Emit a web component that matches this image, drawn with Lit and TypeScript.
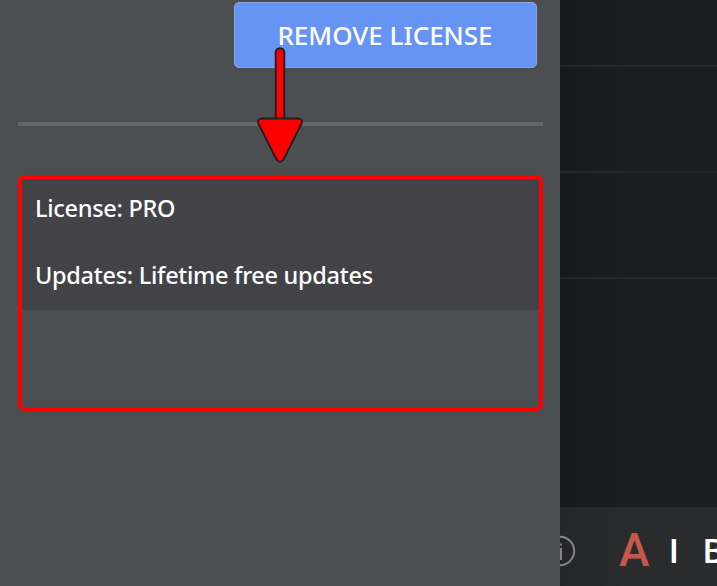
import { LitElement, html, css } from "lit";
import { customElement } from "lit/decorators.js";

@customElement("license-panel")
class LicensePanel extends LitElement {
  static styles = css`
    :host {
      display: flex;
      flex-direction: column;
      position: relative;
      box-sizing: border-box;
      width: 560px;
      height: 586px;
      padding: 2px 17.500px 0 17.500px;
      background: #4b4f51;
      color: #fff;
    }
    .remove {
      align-self: flex-end;
      box-sizing: border-box;
      width: 303px;
      height: 66px;
      margin: 0 6px 0 0;
      padding: 0;
      border: 1px solid #8ba5dc;
      border-radius: 5px;
      background: #6694f5;
      color: #fff;
      font: 500 26px/64px "Noto Sans", sans-serif;
      text-align: center;
    }
    .rule {
      height: 4px;
      margin-top: 54px;
      background: #656569;
    }
    .details {
      box-sizing: border-box;
      height: 236px;
      margin-top: 49px;
      border: 4px solid #f00;
      border-radius: 7px;
    }
    .row {
      height: 67px;
      padding-left: 13.500px;
      background: #434347;
      font: 500 23.500px/58px "Noto Sans", sans-serif;
      letter-spacing: -0.290px;
      white-space: nowrap;
    }
    .row:last-child {
      height: 63.500px;
    }
    .arrow {
      position: absolute;
      left: 254px;
      top: 44px;
    }
  `;
  render() {
    return html`
      <button class="remove">REMOVE LICENSE</button>
      <div class="rule"></div>
      <div class="details">
        <div class="row">License: PRO</div>
        <div class="row">Updates: Lifetime free updates</div>
      </div>
      <svg class="arrow" width="52" height="122" viewBox="0 0 52 122">
        <path
          d="M21.700 74.500V8.500a4.300 4.300 0 0 1 8.600 0V74.500H44.200Q49.600 75.300 47.300 80.100L29.600 115.200Q26 120.400 22.400 115.200L4.700 80.100Q2.400 75.300 7.800 74.500Z"
          fill="#f00" stroke="#211d20" stroke-width="1.900" stroke-linejoin="round"
        />
        <path d="M21.700 74.500h8.600" stroke="#211d20" stroke-width="1.900" />
      </svg>
    `;
  }
}

@customElement("page-strip")
class PageStrip extends LitElement {
  static styles = css`
    :host {
      display: flex;
      flex-direction: column;
      width: 157px;
      height: 586px;
      overflow: hidden;
      background: linear-gradient(90deg, #17181b, #1c1d20 65px);
    }
    .item {
      box-sizing: border-box;
      flex: none;
      height: 106px;
      border-bottom: 2px solid #27282b;
    }
    .item:first-child {
      height: 67px;
    }
    .bar {
      display: flex;
      align-items: flex-start;
      height: 79px;
      margin-top: auto;
      background: linear-gradient(90deg, #252628, #2a2b2d 65px);
      font-family: Roboto, sans-serif;
      white-space: nowrap;
    }
    .info {
      flex: none;
      width: 16px;
      height: 32px;
      margin-top: 28px;
    }
    .accent {
      flex: none;
      width: 31px;
      margin-left: 43px;
      color: #c4594b;
      font: 500 46px/60px Roboto, sans-serif;
      margin-top: 13px;
    }
    .letter {
      flex: none;
      color: #fff;
      font: 500 34px/40px Roboto, sans-serif;
      margin-top: 24px;
    }
    .stem {
      width: 10px;
      margin-left: 19px;
    }
    .bold {
      margin-left: 24px;
    }
  `;
  render() {
    return html`
      <div class="item"></div>
      <div class="item"></div>
      <div class="item"></div>
      <div class="bar">
        <svg class="info" viewBox="0 0 16 32" fill="none" stroke="#858587" stroke-width="2">
          <circle cx="0" cy="16" r="14.200" />
          <path d="M-2 14H1V25" />
          <path d="M-.5 9.500H2" stroke-width="2.200" />
        </svg>
        <span class="accent">A</span>
        <span class="letter stem">I</span>
        <span class="letter bold">B</span>
      </div>
    `;
  }
}

@customElement("app-root")
class AppRoot extends LitElement {
  static styles = css`
    :host {
      display: flex;
      width: 717px;
      height: 586px;
      overflow: hidden;
    }
  `;
  render() {
    return html`<license-panel></license-panel><page-strip></page-strip>`;
  }
}
